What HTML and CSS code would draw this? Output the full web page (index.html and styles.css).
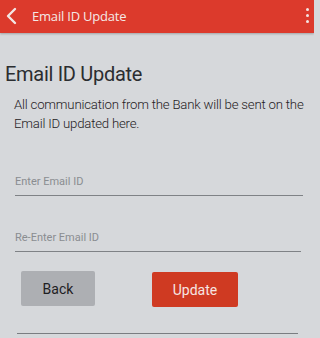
FILE: index.html
```html
<!DOCTYPE html>
<html>
<head>
<meta charset="utf-8">
<link rel="stylesheet" href="styles.css">
</head>
<body>
<div class="app">
  <header class="bar">
    <svg class="back-icon" width="12" height="18" viewBox="0 0 12 18"><path d="M10 2 L3 9 L10 16" fill="none" stroke="#f3e6e4" stroke-width="2.4" stroke-linecap="round" stroke-linejoin="round"/></svg>
    <span class="bar-title">Email ID Update</span>
    <span class="menu"><i></i><i></i><i></i></span>
  </header>
  <main class="content">
    <h1 class="title">Email ID Update</h1>
    <p class="desc">All communication from the Bank will be sent on the Email ID updated here.</p>
    <div class="field"><span class="ph">Enter Email ID</span></div>
    <div class="field second"><span class="ph">Re-Enter Email ID</span></div>
    <div class="actions">
      <button class="btn back">Back</button>
      <button class="btn update">Update</button>
    </div>
    <div class="bottom-line"></div>
  </main>
</div>
</body>
</html>
```
FILE: styles.css
```css
html, body { margin: 0; padding: 0; }
body {
  width: 314px;
  height: 338px;
  overflow: hidden;
  background: #d6d8db;
  font-family: Roboto, "Noto Sans", sans-serif;
}
.app { display: flex; flex-direction: column; height: 338px; }
.bar {
  height: 33px;
  background: #dc3a2c;
  display: flex;
  align-items: center;
  padding: 0 0 0 5px;
  box-shadow: 0 1px 2px rgba(0,0,0,0.25);
  box-sizing: border-box;
}
.back-icon { flex: none; margin-right: 15px; margin-top: -2px; }
.bar-title {
  color: #f4e9e6;
  font-size: 13px;
  font-family: "Open Sans", Roboto, sans-serif;
  letter-spacing: -0.2px;
  flex: 1;
  margin-top: -2px;
}
.menu {
  display: flex; flex-direction: column; gap: 3px;
  width: 4px; margin-right: 4px; margin-top: -2px;
}
.menu i { width: 3px; height: 3px; border-radius: 50%; background: #f3e6e4; display: block; }
.content { padding: 0; }
.title {
  margin: 29px 0 0 5px;
  font-size: 20px;
  font-weight: 400;
  color: #2b2d30;
  line-height: 24px;
  letter-spacing: -0.3px;
}
.desc {
  margin: 9px 2px 0 14px;
  font-size: 13.2px;
  font-weight: 300;
  line-height: 19px;
  color: #1f2124;
  letter-spacing: -0.2px;
}
.field {
  margin: 38px 11px 0 15px;
  border-bottom: 1px solid #7f8286;
  height: 25px;
  box-sizing: border-box;
}
.field.second { margin-top: 31px; margin-right: 13px; }
.ph { font-size: 11px; color: #8a8d91; line-height: 14px; display: block; padding-top: 4px; }
.actions {
  display: flex;
  margin: 19px 0 0 21px;
  gap: 57px;
}
.btn {
  border: none;
  border-radius: 2px;
  font-family: Roboto, sans-serif;
  font-size: 14px;
  height: 35px;
  padding: 0;
}
.back { width: 74px; background: #adafb3; color: #1e2023; }
.update { width: 86px; background: #cf3a22; color: #f6e6e2; margin-top: 1px; }
.bottom-line {
  margin: 26px 16px 0 17px;
  border-top: 1px solid #7a7d81;
}
```
